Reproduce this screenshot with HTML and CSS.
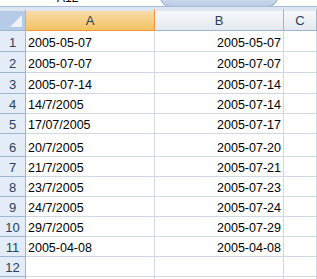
FILE: index.html
```html
<!DOCTYPE html>
<html lang="en">
<head>
  <meta charset="UTF-8">
  <title>Sheet1</title>
  <link rel="stylesheet" href="styles.css">
</head>
<body>
  <div class="formula-bar">
    <span class="name-box">A12</span>
    <span class="expand-tab"><span class="tab-mark">ˇ</span></span>
  </div>
  <div class="sheet">
    <div class="corner"><span class="corner-tri"></span></div>
    <div class="col-head active">A</div>
    <div class="col-head">B</div>
    <div class="col-head">C</div>

    <div class="row-head">1</div><div class="cell">2005-05-07</div><div class="cell num">2005-05-07</div><div class="cell"></div>
    <div class="row-head">2</div><div class="cell">2005-07-07</div><div class="cell num">2005-07-07</div><div class="cell"></div>
    <div class="row-head">3</div><div class="cell">2005-07-14</div><div class="cell num">2005-07-14</div><div class="cell"></div>
    <div class="row-head">4</div><div class="cell">14/7/2005</div><div class="cell num">2005-07-14</div><div class="cell"></div>
    <div class="row-head">5</div><div class="cell">17/07/2005</div><div class="cell num">2005-07-17</div><div class="cell"></div>
    <div class="row-head">6</div><div class="cell">20/7/2005</div><div class="cell num">2005-07-20</div><div class="cell"></div>
    <div class="row-head">7</div><div class="cell">21/7/2005</div><div class="cell num">2005-07-21</div><div class="cell"></div>
    <div class="row-head">8</div><div class="cell">23/7/2005</div><div class="cell num">2005-07-23</div><div class="cell"></div>
    <div class="row-head">9</div><div class="cell">24/7/2005</div><div class="cell num">2005-07-24</div><div class="cell"></div>
    <div class="row-head">10</div><div class="cell">29/7/2005</div><div class="cell num">2005-07-29</div><div class="cell"></div>
    <div class="row-head">11</div><div class="cell">2005-04-08</div><div class="cell num">2005-04-08</div><div class="cell"></div>
    <div class="row-head">12</div><div class="cell"></div><div class="cell num"></div><div class="cell"></div>
    <div class="row-head"></div><div class="cell"></div><div class="cell num"></div><div class="cell"></div>
  </div>
</body>
</html>
```

FILE: styles.css
```css
body {
  margin: 0;
  width: 317px;
  height: 279px;
  overflow: hidden;
  background-color: #fff;
  font-family: "Liberation Sans", Arial, sans-serif;
}

/* strip left of the formula bar */
.formula-bar {
  position: relative;
  height: 6px;
  background-color: #fff;
  border-bottom: 1px solid #a7bcd6;
  overflow: hidden;
}

.name-box {
  position: absolute;
  left: 57px;
  top: -9px;
  font-size: 12px;
  color: #000;
}

.expand-tab {
  position: absolute;
  left: 160px;
  top: -10px;
  width: 116px;
  height: 15px;
  border: 1px solid #8ba7ca;
  border-radius: 0 0 10px 10px;
  background: linear-gradient(#dfe9f5, #b9cde6);
}

.tab-mark {
  position: absolute;
  left: 64px;
  top: 4px;
  font-size: 10px;
  color: #333;
}

.sheet {
  display: grid;
  grid-template-columns: 26px 129px 129px 1fr;
  grid-template-rows: 23px 21px 21px 21px 20px 20px 23px 20px 20px 20px 20px 20px 20px 20px;
  font-size: 12.5px;
  border-top: 1px solid #dbe4f0;
}

.corner {
  position: relative;
  background: #b5cbe7;
  border-top: 3px solid #dde6f1;
  border-right: 1px solid #9eb6ce;
  border-bottom: 1px solid #9eb6ce;
}

.corner-tri {
  position: absolute;
  right: 3px;
  bottom: 3px;
  width: 0;
  height: 0;
  border-left: 12px solid transparent;
  border-bottom: 12px solid #eef2f7;
}

.col-head {
  display: flex;
  align-items: center;
  justify-content: center;
  background: linear-gradient(#f7f8fa, #e4e9f0);
  border-top: 3px solid #dde6f1;
  border-right: 1px solid #9eb6ce;
  border-bottom: 1px solid #9eb6ce;
  color: #27415f;
  font-size: 13px;
}

.col-head.active {
  background: linear-gradient(#f9dca8, #f2c364);
  border-right-color: #f29536;
  border-bottom-color: #f29536;
}

.row-head {
  display: flex;
  align-items: flex-end;
  justify-content: center;
  padding-bottom: 1px;
  background-color: #e4ecf7;
  border-right: 1px solid #9eb6ce;
  border-bottom: 1px solid #9eb6ce;
  color: #27415f;
  font-size: 13px;
}

.cell {
  display: flex;
  align-items: flex-end;
  padding: 0 2px 1px 2px;
  border-right: 1px solid #d0d7e5;
  border-bottom: 1px solid #d0d7e5;
  color: #000;
  white-space: nowrap;
}

.cell.num {
  justify-content: flex-end;
}
```
